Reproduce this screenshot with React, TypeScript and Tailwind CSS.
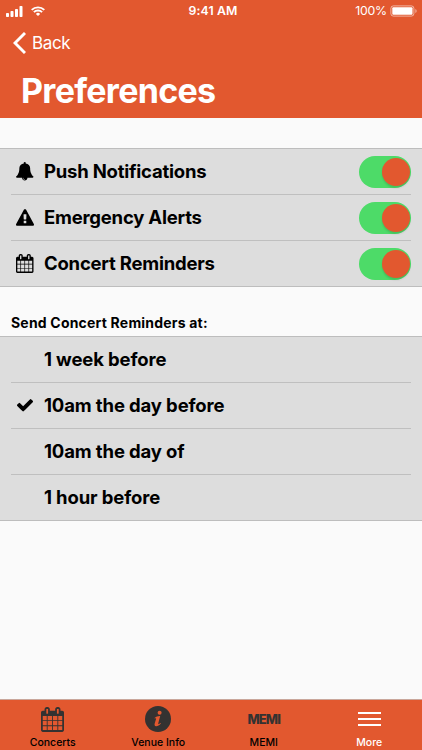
import { useState } from "react";

const REMINDER_TIMES = ["1 week before", "10am the day before", "10am the day of", "1 hour before"];

type IconProps = { className: string };

function BellIcon({ className }: IconProps) {
  return (
    <svg viewBox="64 0 1664 1792" preserveAspectRatio="none" fill="currentColor" className={className}>
      <path d="M912 1696q0-16-16-16-59 0-101.500-42.500t-42.500-101.500q0-16-16-16t-16 16q0 73 51.500 124.500t124.500 51.500q16 0 16-16zm816-288q0 52-38 90t-90 38h-448q0 106-75 181t-181 75-181-75-75-181h-448q-52 0-90-38t-38-90q50-42 91-88t85-119.500 74.500-158.500 50-206 19.500-260q0-152 117-282.500t307-158.500q-8-19-8-39 0-40 28-68t68-28 68 28 28 68q0 20-8 39 190 28 307 158.500t117 282.500q0 139 19.500 260t50 206 74.500 158.500 85 119.500 91 88z" />
    </svg>
  );
}

function WarningIcon({ className }: IconProps) {
  return (
    <svg viewBox="0 0 1792 1664" fill="currentColor" className={className}>
      <path d="M1024 1375v-190q0-14-9.500-23.500t-22.500-9.500h-192q-13 0-22.500 9.500t-9.500 23.500v190q0 14 9.500 23.500t22.500 9.500h192q13 0 22.500-9.500t9.500-23.500zm-2-374l18-459q0-12-10-19-13-11-24-11h-220q-11 0-24 11-10 7-10 21l17 457q0 10 10 16.500t24 6.500h185q14 0 23.500-6.500t10.500-16.500zm-14-934l768 1408q35 63-2 126-17 29-46.500 46t-63.500 17h-1536q-34 0-63.500-17t-46.500-46q-37-63-2-126l768-1408q17-31 47-49t65-18 65 18 47 49z" />
    </svg>
  );
}

function CheckIcon({ className }: IconProps) {
  return (
    <svg viewBox="121 334 1550 1188" fill="currentColor" className={className}>
      <path d="M1671 566q0 40-28 68l-724 724-136 136q-28 28-68 28t-68-28l-136-136-362-362q-28-28-28-68t28-68l136-136q28-28 68-28t68 28l294 295 656-657q28-28 68-28t68 28l136 136q28 28 28 68z" />
    </svg>
  );
}

function CalendarIcon({ className }: IconProps) {
  return (
    <svg viewBox="0 0 1664 1792" fill="currentColor" className={className}>
      <path d="M128 1664h288v-288h-288v288zM480 1664h320v-288h-320v288zM128 1312h288v-320h-288v320zM480 1312h320v-320h-320v320zM128 928h288v-288h-288v288zM864 1664h320v-288h-320v288zM480 928h320v-288h-320v288zM1248 1664h288v-288h-288v288zM864 1312h320v-320h-320v320zM512 448v-288q0-13-9.500-22.500t-22.500-9.500h-64q-13 0-22.500 9.500t-9.500 22.500v288q0 13 9.500 22.500t22.500 9.500h64q13 0 22.500-9.500t9.500-22.500zM1248 1312h288v-320h-288v320zM864 928h320v-288h-320v288zM1248 928h288v-288h-288v288zM1280 448v-288q0-13-9.500-22.500t-22.500-9.500h-64q-13 0-22.500 9.500t-9.500 22.500v288q0 13 9.500 22.500t22.500 9.500h64q13 0 22.500-9.500t9.500-22.500zM1664 384v1280q0 52-38 90t-90 38h-1408q-52 0-90-38t-38-90v-1280q0-52 38-90t90-38h128v-96q0-66 47-113t113-47h64q66 0 113 47t47 113v96h384v-96q0-66 47-113t113-47h64q66 0 113 47t47 113v96h128q52 0 90 38t38 90z" />
    </svg>
  );
}

function InfoIcon() {
  return (
    <svg viewBox="0 0 26 26" className="size-[26px]">
      <circle cx="13" cy="13" r="13" fill="#343231" />
      <circle cx="14.600" cy="6.700" r="2" fill="#e2582f" />
      <path d="M9.500 12.100C11 10.600 12.900 9.900 15.200 10L13.200 17.600C13 18.500 13.700 18.400 15.400 17L15.900 17.600C14.100 19.600 12.400 20.500 11 20.300C9.600 20.100 9.300 19 9.700 17.600L11.100 12.700C11.300 11.900 10.800 12 9.900 12.600Z" fill="#e2582f" />
    </svg>
  );
}

function StatusBar() {
  return (
    <div className="grid h-[22px] grid-cols-3 items-center pl-[6px] pr-[5px]">
      <div className="flex items-center gap-2">
        <svg viewBox="0 0 17 11" fill="white" className="h-[11px] w-[17px]">
          <rect x="0" y="7" width="3" height="4" rx=".8" />
          <rect x="4.500" y="5" width="3" height="6" rx=".8" />
          <rect x="9" y="3" width="3" height="8" rx=".8" />
          <rect x="13.500" y="0" width="3" height="11" rx=".8" />
        </svg>
        <svg viewBox="0 0 14 10" className="h-[10px] w-[14px]" fill="none" stroke="white" strokeWidth="1.900">
          <path d="M.7 3.900a9 9 0 0 1 12.600 0M2.900 6.200a5.800 5.800 0 0 1 8.200 0" />
          <path d="M7 10L4.900 7.900a3 3 0 0 1 4.200 0z" fill="white" stroke="none" />
        </svg>
      </div>
      <div className="pl-[3px] text-center text-[12.3px] font-semibold tracking-[0.1px]">9:41 AM</div>
      <div className="flex items-center justify-end gap-[3px]">
        <span className="text-[12.3px] tracking-[-0.2px]">100%</span>
        <svg viewBox="0 0 27 12" className="h-[12px] w-[27px]">
          <rect x=".9" y=".9" width="23" height="10.200" rx="2.500" fill="none" stroke="white" strokeOpacity=".55" />
          <rect x="2.300" y="2.300" width="20.200" height="7.400" rx="1" fill="white" />
          <path d="M25.300 4v4q1.400-.6 1.400-2t-1.400-2z" fill="white" fillOpacity=".5" />
        </svg>
      </div>
    </div>
  );
}

function Toggle({ on, onClick }: { on: boolean; onClick: () => void }) {
  return (
    <button onClick={onClick} role="switch" aria-checked={on}
      className={`flex h-8 w-[52px] items-center rounded-full px-[1.5px] ${on ? "justify-end bg-[#4ddb68]" : "justify-start bg-gray-400"}`}>
      <span className="size-7 rounded-full bg-[#e2582f] shadow-[0_2px_2px_rgba(0,0,0,0.12)]" />
    </button>
  );
}

export default function App() {
  const [enabled, setEnabled] = useState([true, true, true]);
  const [selected, setSelected] = useState(1);

  const settings = [
    { label: "Push Notifications", icon: <BellIcon className="h-[18.500px] w-[17.500px]" /> },
    { label: "Emergency Alerts", icon: <WarningIcon className="h-[17px] w-[18px]" /> },
    { label: "Concert Reminders", icon: <CalendarIcon className="h-[19px] w-[17.500px]" /> },
  ];

  return (
    <div className="flex h-[750px] w-[422px] flex-col overflow-hidden bg-[#fafafa] font-['Inter',sans-serif] text-black">
      <header className="h-[118px] bg-[#e2582f] text-white">
        <StatusBar />
        <button className="flex h-[42px] items-center gap-[6px] pl-[13px]">
          <svg viewBox="0 0 13 22" className="h-[22px] w-[13px]" fill="none" stroke="white" strokeWidth="2.900">
            <path d="M12 1L2 11l10 10" />
          </svg>
          <span className="pt-px text-[17px] tracking-[-0.35px]">Back</span>
        </button>
        <h1 className="pl-[21px] pt-[4px] text-[34px] leading-[46px] font-bold tracking-[-0.7px]">Preferences</h1>
      </header>

      <main className="flex-1 pt-[30px]">
        <section className="border-y border-[#bdbdbd] bg-[#dddddd] px-[11px]">
          {settings.map((s, i) => (
            <div key={s.label} className="flex h-[46px] items-center border-b border-[#bfbfbf] last:h-[45px] last:border-b-0">
              <span className="flex w-[33px] pl-[5px]">{s.icon}</span>
              <span className="flex-1 text-[18.500px] font-[650] tracking-[-0.22px]">{s.label}</span>
              <Toggle on={enabled[i]} onClick={() => setEnabled(enabled.map((v, j) => (j === i ? !v : v)))} />
            </div>
          ))}
        </section>

        <h2 className="h-[49px] pl-[11px] pt-[26px] text-[14px] leading-[20px] font-[650] tracking-[0.2px]">Send Concert Reminders at:</h2>

        <section className="border-y border-[#bdbdbd] bg-[#dddddd] px-[11px]">
          {REMINDER_TIMES.map((time, i) => (
            <button key={time} onClick={() => setSelected(i)}
              className="flex h-[46px] w-full items-center border-b border-[#bfbfbf] text-left last:h-[45px] last:border-b-0">
              <span className="flex w-[33px] pl-[6px]">{selected === i && <CheckIcon className="h-[12.500px] w-4" />}</span>
              <span className="text-[18.500px] font-[650] tracking-[-0.13px]">{time}</span>
            </button>
          ))}
        </section>
      </main>

      <nav className="grid h-[51px] grid-cols-4 border-t border-[#c9a79b] bg-[#e2582f] text-[10.5px] leading-[12px] font-medium">
        <button className="flex flex-col items-center pt-[6px]">
          <span className="flex h-[31px] items-center pb-[5px] text-[#343231]"><CalendarIcon className="h-[25px] w-[23px]" /></span>
          <span>Concerts</span>
        </button>
        <button className="flex flex-col items-center pt-[6px]">
          <span className="flex h-[31px] items-center pb-[5px]"><InfoIcon /></span>
          <span>Venue Info</span>
        </button>
        <button className="flex flex-col items-center pt-[6px]">
          <span className="flex h-[31px] items-center pb-[6px] text-[13px] font-extrabold tracking-[-0.9px] text-[#343231]">MEMI</span>
          <span>MEMI</span>
        </button>
        <button className="flex flex-col items-center pt-[6px] text-white">
          <span className="flex h-[31px] flex-col gap-1 pt-[6px]">
            <span className="h-[2px] w-[23px] bg-white" />
            <span className="h-[2px] w-[23px] bg-white" />
            <span className="h-[2px] w-[23px] bg-white" />
          </span>
          <span>More</span>
        </button>
      </nav>
    </div>
  );
}
